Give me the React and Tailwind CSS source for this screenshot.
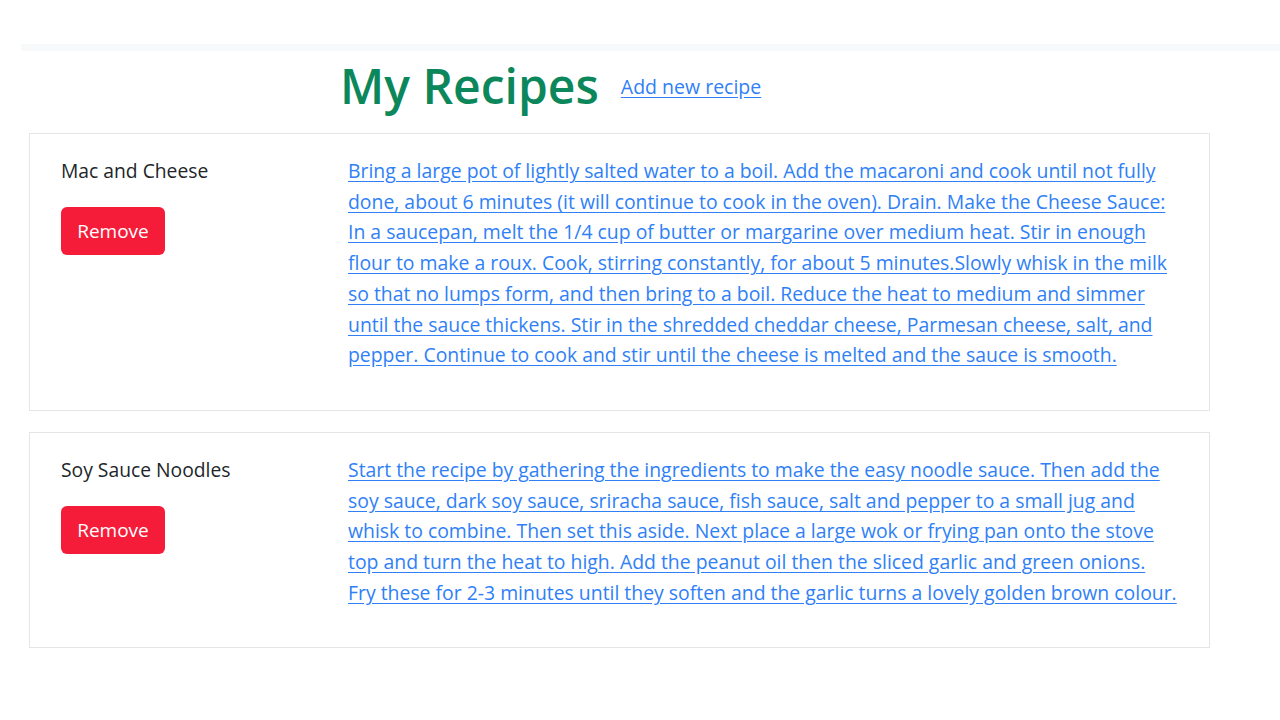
import React from "react";

const RECIPES = [
  {
    name: "Mac and Cheese",
    lines: [
      "Bring a large pot of lightly salted water to a boil. Add the macaroni and cook until not fully",
      "done, about 6 minutes (it will continue to cook in the oven). Drain. Make the Cheese Sauce:",
      "In a saucepan, melt the 1/4 cup of butter or margarine over medium heat. Stir in enough",
      "flour to make a roux. Cook, stirring constantly, for about 5 minutes.Slowly whisk in the milk",
      "so that no lumps form, and then bring to a boil. Reduce the heat to medium and simmer",
      "until the sauce thickens. Stir in the shredded cheddar cheese, Parmesan cheese, salt, and",
      "pepper. Continue to cook and stir until the cheese is melted and the sauce is smooth.",
    ],
  },
  {
    name: "Soy Sauce Noodles",
    lines: [
      "Start the recipe by gathering the ingredients to make the easy noodle sauce. Then add the",
      "soy sauce, dark soy sauce, sriracha sauce, fish sauce, salt and pepper to a small jug and",
      "whisk to combine. Then set this aside. Next place a large wok or frying pan onto the stove",
      "top and turn the heat to high. Add the peanut oil then the sliced garlic and green onions.",
      "Fry these for 2-3 minutes until they soften and the garlic turns a lovely golden brown colour.",
    ],
  },
];

function RecipeCard({ recipe }) {
  return (
    <div className="flex border border-[#e3e5e8] bg-white px-[31px] pt-[22px] pb-[39px]">
      <div className="w-[287px] shrink-0">
        <div className="text-[19.3px] leading-[30px] text-[#212529]">{recipe.name}</div>
        <button
          type="button"
          className="mt-[21px] h-[48px] w-[104px] rounded-[6px] bg-[#f51c3a] text-[19px] text-white"
        >
          Remove
        </button>
      </div>
      <a href="#" className="block text-[19.4px] leading-[30.7px] text-[#2f7ff7] underline underline-offset-[3px]">
        {recipe.lines.map((line, i) => (
          <span key={i} className="block whitespace-nowrap">
            {line}
          </span>
        ))}
      </a>
    </div>
  );
}

export default function App() {
  return (
    <div className="min-h-[720px] bg-white pt-[44px] font-['Open_Sans',sans-serif]">
      <div className="ml-[21px] h-[7px] bg-[#f8f9fa]" />
      <div className="ml-[29px] w-[1181px]">
        <header className="flex items-center gap-[22px] pl-[311px] pt-[1px] pb-[13px]">
          <h1 className="text-[48px] leading-[68px] font-semibold text-[#0b875b]">My Recipes</h1>
          <a href="#" className="mt-[2px] text-[19.5px] text-[#2f7ff7] underline underline-offset-[3px]">
            Add new recipe
          </a>
        </header>
        <div className="flex flex-col gap-[21px]">
          {RECIPES.map((r) => (
            <RecipeCard key={r.name} recipe={r} />
          ))}
        </div>
      </div>
    </div>
  );
}
